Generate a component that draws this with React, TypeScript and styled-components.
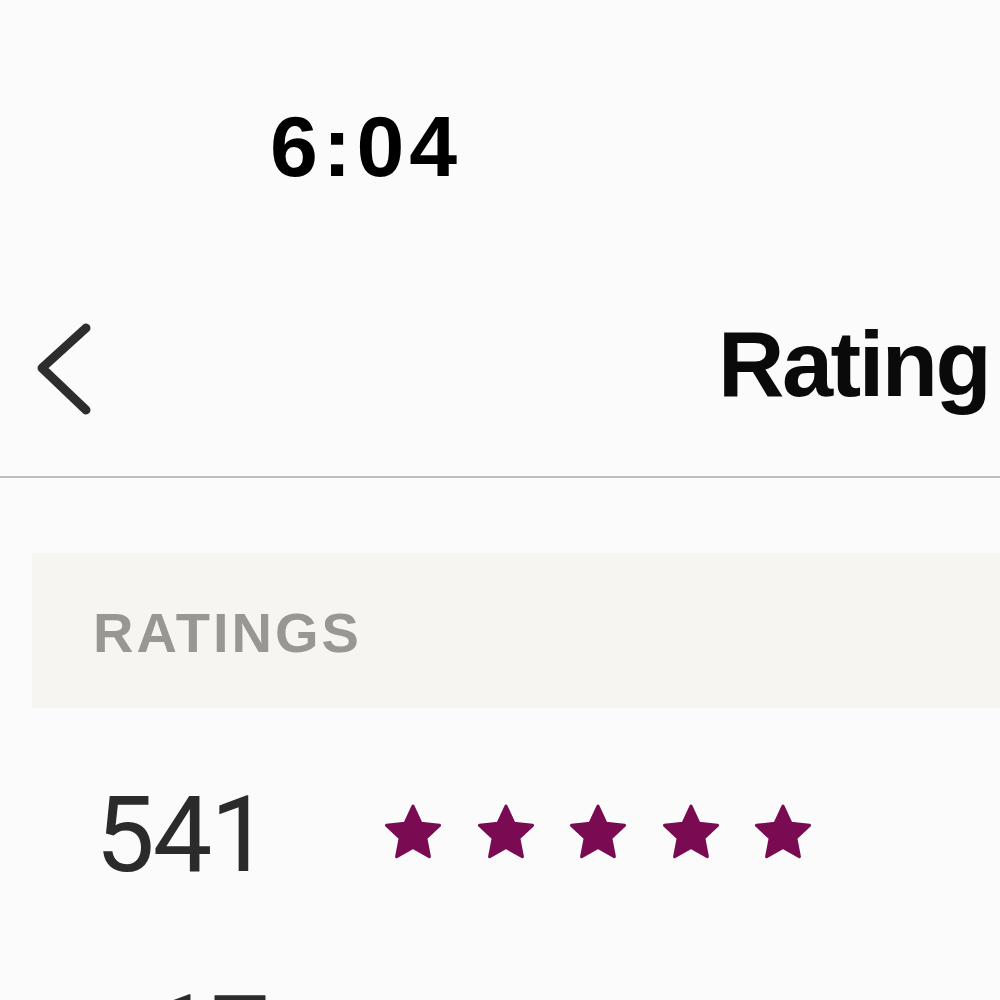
import styled, { createGlobalStyle } from 'styled-components'

const GlobalStyle = createGlobalStyle`
  html, body {
    margin: 0;
    padding: 0;
    background: #fbfbfb;
  }
  body {
    width: 1000px;
    height: 1000px;
    overflow: hidden;
    font-family: 'Liberation Sans', Arial, sans-serif;
  }
`

type RatingRowData = {
  count: number
  stars: number
}

const rows: RatingRowData[] = [
  { count: 541, stars: 5 },
  { count: 17, stars: 4 },
]

const Star = () => (
  <svg width="60" height="60" viewBox="0 0 58 58">
    <polygon
      points="29,4 36.6,20.5 54.6,22.6 41.4,35 44.8,52.8 29,44 13.2,52.8 16.6,35 3.4,22.6 21.4,20.5"
      fill="#7a0b53"
      stroke="#7a0b53"
      strokeWidth="3"
      strokeLinejoin="round"
    />
  </svg>
)

const BackIcon = () => (
  <svg width="60" height="100" viewBox="0 0 60 100">
    <polyline
      points="52,8 8,48 52,90"
      fill="none"
      stroke="#2d2d2d"
      strokeWidth="9"
      strokeLinecap="round"
      strokeLinejoin="round"
    />
  </svg>
)

export default function App() {
  return (
    <>
      <GlobalStyle />
      <Screen>
        <StatusBar>
          <Time>6:04</Time>
        </StatusBar>
        <NavBar>
          <BackButton>
            <BackIcon />
          </BackButton>
          <Title>Rating</Title>
        </NavBar>
        <Content>
          <SectionHeader>RATINGS</SectionHeader>
          <RatingList>
            {rows.map((row) => (
              <RatingRow key={row.count}>
                <Count>{row.count}</Count>
                <Stars>
                  {Array.from({ length: row.stars }).map((_, i) => (
                    <Star key={i} />
                  ))}
                </Stars>
              </RatingRow>
            ))}
          </RatingList>
        </Content>
      </Screen>
    </>
  )
}

const Screen = styled.div`
  width: 1000px;
  height: 1000px;
  overflow: hidden;
  display: flex;
  flex-direction: column;
`

const StatusBar = styled.div`
  height: 250px;
  padding: 103px 0 0 270px;
  box-sizing: border-box;
  flex-shrink: 0;
`

const Time = styled.div`
  font-family: 'Liberation Sans', Arial, sans-serif;
  font-weight: 700;
  font-size: 86px;
  line-height: 86px;
  letter-spacing: 5px;
  color: #000;
`

const NavBar = styled.div`
  height: 228px;
  box-sizing: border-box;
  border-bottom: 2px solid #bdbdbd;
  display: flex;
  align-items: flex-start;
  flex-shrink: 0;
  overflow: hidden;
`

const BackButton = styled.div`
  margin: 70px 0 0 34px;
  width: 60px;
  height: 100px;
  flex-shrink: 0;
`

const Title = styled.div`
  margin: 68px 0 0 624px;
  font-family: 'Liberation Sans', Arial, sans-serif;
  font-weight: 700;
  font-size: 92px;
  line-height: 92px;
  letter-spacing: -2.5px;
  color: #0a0a0a;
  white-space: nowrap;
`

const Content = styled.div`
  padding: 75px 0 0 32px;
`

const SectionHeader = styled.div`
  height: 155px;
  box-sizing: border-box;
  padding: 52px 0 0 61px;
  background: #f6f5f2;
  font-family: 'Liberation Sans', Arial, sans-serif;
  font-weight: 700;
  font-size: 56px;
  line-height: 56px;
  letter-spacing: 3px;
  color: #9a9792;
`

const RatingList = styled.div`
  padding-top: 74px;
`

const RatingRow = styled.div`
  height: 199px;
  display: flex;
  align-items: flex-start;
`

const Count = styled.div`
  width: 236px;
  text-align: right;
  font-family: Roboto, 'Liberation Sans', sans-serif;
  font-weight: 400;
  font-size: 106px;
  line-height: 106px;
  letter-spacing: -2px;
  color: #2b2b2b;
`

const Stars = styled.div`
  margin: 20px 0 0 115px;
  display: flex;
  gap: 32.5px;
`
